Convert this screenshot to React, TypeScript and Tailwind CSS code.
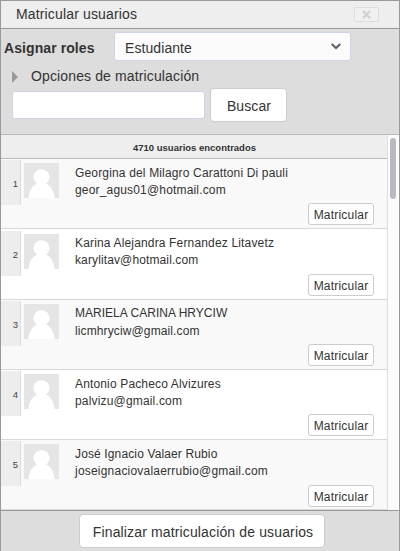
const users = [
  { name: "Georgina del Milagro Carattoni Di pauli", email: "geor_agus01@hotmail.com", row: "h-[70px] bg-[#f9f9f9]", nameTracking: "tracking-[0.16px]", emailTracking: "tracking-[0.17px]", nameTop: "pt-[6px]", emailTop: "", buttonTop: "mt-[4px]" },
  { name: "Karina Alejandra Fernandez Litavetz", email: "karylitav@hotmail.com", row: "h-[71px] bg-white pt-px", nameTracking: "tracking-[0.16px]", emailTracking: "tracking-[0.12px]", nameTop: "pt-[5px]", emailTop: "", buttonTop: "mt-[5px]" },
  { name: "MARIELA CARINA HRYCIW", email: "licmhryciw@gmail.com", row: "h-[70px] bg-[#f9f9f9]", nameTracking: "tracking-[0.02px]", emailTracking: "tracking-[0.12px]", nameTop: "pt-[5px]", emailTop: "mt-px", buttonTop: "mt-[4px]" },
  { name: "Antonio Pacheco Alvizures", email: "palvizu@gmail.com", row: "h-[70px] bg-white", nameTracking: "tracking-[0.15px]", emailTracking: "tracking-[0.17px]", nameTop: "pt-[6px]", emailTop: "", buttonTop: "mt-[4px]" },
  { name: "José Ignacio Valaer Rubio", email: "joseignaciovalaerrubio@gmail.com", row: "h-[70px] bg-[#f9f9f9]", nameTracking: "tracking-[0.13px]", emailTracking: "tracking-[0.21px]", nameTop: "pt-[6px]", emailTop: "", buttonTop: "mt-[5px]" },
];

function Avatar() {
  return (
    <svg className="mt-1 ml-[3px] h-[35px] w-[35px] shrink-0" viewBox="0 0 35 35">
      <rect width="35" height="35" fill="#e5e5e5" />
      <circle cx="17.5" cy="14.2" r="8" fill="#fff" />
      <path d="M4.5 35C5 27.5 8.5 22.5 13 20.5H22C26.5 22.5 30 27.5 30.5 35Z" fill="#fff" />
    </svg>
  );
}

function UserRow({ user, number }: { user: (typeof users)[number]; number: number }) {
  return (
    <li className={`flex shrink-0 border-b border-[#d8d8d8] ${user.row}`}>
      <div className="mt-px flex h-[45px] w-5 shrink-0 items-center justify-end border-r border-[#ddd] bg-[#ededed] pt-[3px] pr-[2px] text-[9.5px] leading-none text-[#444]">
        {number}
      </div>
      <Avatar />
      <div className={`ml-4 flex min-w-0 grow flex-col text-[12px] leading-[17px] ${user.nameTop}`}>
        <p className={`whitespace-nowrap ${user.nameTracking}`}>{user.name}</p>
        <p className={`whitespace-nowrap ${user.emailTracking} ${user.emailTop}`}>{user.email}</p>
        <button className={`mr-[13px] h-[22px] w-[66px] shrink-0 self-end rounded-[3px] border border-[#ccc] bg-white pt-px text-[12px] leading-[20px] tracking-[0.2px] ${user.buttonTop}`}>
          Matricular
        </button>
      </div>
    </li>
  );
}

export default function App() {
  return (
    <div className="flex h-[551px] w-[400px] flex-col overflow-hidden border-x border-t border-[#999] bg-[#ddd] font-['Liberation_Sans',Arial,sans-serif] text-[#333]">
      <header className="flex h-7 shrink-0 items-center justify-between border-b border-[#999] bg-[#eee] pr-5 pl-[15px]">
        <h1 className="-mt-px text-[14px] leading-4 tracking-[0.15px]">Matricular usuarios</h1>
        <button className="flex h-[15px] w-[25px] items-center justify-center rounded-[2px] border border-[#ddd] bg-[#f0f0f0]" aria-label="Cerrar">
          <svg width="9" height="9" viewBox="0 0 9 9" stroke="#d1d1d1" strokeWidth="2.4">
            <path d="M1 1L8 8M8 1L1 8" />
          </svg>
        </button>
      </header>

      <section className="h-[106px] shrink-0 border-b border-[#bbb] pt-[3px] text-[14px]">
        <div className="flex h-[29px] items-center pl-[3px]">
          <label className="w-[110px] pt-[3px] font-bold tracking-[0.08px]">Asignar roles</label>
          <div className="flex h-[29px] w-[237px] items-center justify-between rounded-[3px] border border-[#ced4e8] bg-[#fbfbfc] pr-[9px] pl-[10px]">
            <span className="pt-[3px] tracking-[0.08px]">Estudiante</span>
            <svg width="10" height="7" viewBox="0 0 10 7" fill="none" stroke="#5f6368" strokeWidth="2.2">
              <path d="M.7 1L5 5L9.3 1" />
            </svg>
          </div>
        </div>
        <div className="flex h-[27px] items-center pl-[11px]">
          <svg width="6" height="12" viewBox="0 0 6 12" fill="#999" className="mt-[5px]">
            <path d="M0 0L6 6L0 12Z" />
          </svg>
          <span className="ml-[13px] pt-[3px] tracking-[0.13px]">Opciones de matriculación</span>
        </div>
        <div className="flex h-[34px] items-center pl-[11px]">
          <input className="h-7 w-[193px] rounded-[3px] border border-[#ced4e8] bg-white" />
          <button className="ml-[5px] h-[34px] w-[77px] rounded-[4px] border border-[#ccc] bg-white pt-[2px] pl-px tracking-[0.1px]">Buscar</button>
        </div>
      </section>

      <section className="flex h-[375px] shrink-0 overflow-hidden">
        <div className="flex w-[386px] shrink-0 flex-col overflow-hidden">
          <div className="flex h-6 shrink-0 items-center justify-center border-b border-[#bbb] bg-[#eee] pt-[3px] pl-px text-[9.5px] font-bold">
            4710 usuarios encontrados
          </div>
          <ul className="flex flex-col">
            {users.map((user, index) => (
              <UserRow key={user.email} user={user} number={index + 1} />
            ))}
          </ul>
        </div>
        <div className="w-3 border-l border-[#ddd] bg-[#fcfcfc] pt-[3px] pl-[2px]">
          <div className="h-[61px] w-[6px] rounded-full bg-[#b9bac0]" />
        </div>
      </section>

      <footer className="flex grow items-start border-t border-[#999] pt-[3px] pl-[78px]">
        <button className="h-[34px] w-[246px] rounded-[4px] border border-[#ccc] bg-white pt-[2px] pl-[2px] text-[14px] tracking-[0.14px]">
          Finalizar matriculación de usuarios
        </button>
      </footer>
    </div>
  );
}
